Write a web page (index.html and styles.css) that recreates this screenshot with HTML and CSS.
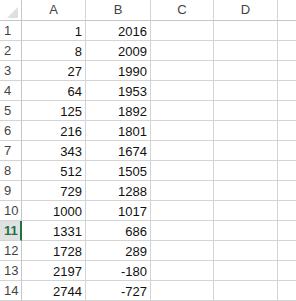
FILE: index.html
```html
<!DOCTYPE html>
<html lang="en">
<head>
    <meta charset="UTF-8">
    <title>Sheet1</title>
    <link rel="stylesheet" href="styles.css">
</head>
<body>
    <div class="sheet">
        <div class="corner"><span class="tri"></span></div>
        <div class="colhead">A</div>
        <div class="colhead">B</div>
        <div class="colhead">C</div>
        <div class="colhead">D</div>
        <div class="colhead last"></div>

        <div class="rowhead">1</div><div class="cell">1</div><div class="cell">2016</div><div class="cell"></div><div class="cell"></div><div class="cell last"></div>
        <div class="rowhead">2</div><div class="cell">8</div><div class="cell">2009</div><div class="cell"></div><div class="cell"></div><div class="cell last"></div>
        <div class="rowhead">3</div><div class="cell">27</div><div class="cell">1990</div><div class="cell"></div><div class="cell"></div><div class="cell last"></div>
        <div class="rowhead">4</div><div class="cell">64</div><div class="cell">1953</div><div class="cell"></div><div class="cell"></div><div class="cell last"></div>
        <div class="rowhead">5</div><div class="cell">125</div><div class="cell">1892</div><div class="cell"></div><div class="cell"></div><div class="cell last"></div>
        <div class="rowhead">6</div><div class="cell">216</div><div class="cell">1801</div><div class="cell"></div><div class="cell"></div><div class="cell last"></div>
        <div class="rowhead">7</div><div class="cell">343</div><div class="cell">1674</div><div class="cell"></div><div class="cell"></div><div class="cell last"></div>
        <div class="rowhead">8</div><div class="cell">512</div><div class="cell">1505</div><div class="cell"></div><div class="cell"></div><div class="cell last"></div>
        <div class="rowhead">9</div><div class="cell">729</div><div class="cell">1288</div><div class="cell"></div><div class="cell"></div><div class="cell last"></div>
        <div class="rowhead">10</div><div class="cell">1000</div><div class="cell">1017</div><div class="cell"></div><div class="cell"></div><div class="cell last"></div>
        <div class="rowhead active">11</div><div class="cell">1331</div><div class="cell">686</div><div class="cell"></div><div class="cell"></div><div class="cell last"></div>
        <div class="rowhead">12</div><div class="cell">1728</div><div class="cell">289</div><div class="cell"></div><div class="cell"></div><div class="cell last"></div>
        <div class="rowhead">13</div><div class="cell">2197</div><div class="cell">-180</div><div class="cell"></div><div class="cell"></div><div class="cell last"></div>
        <div class="rowhead">14</div><div class="cell">2744</div><div class="cell">-727</div><div class="cell"></div><div class="cell"></div><div class="cell last"></div>
    </div>
</body>
</html>
```

FILE: styles.css
```css
body {
    margin: 0;
    background: #fff;
    font-family: "Liberation Sans", Arial, sans-serif;
    font-size: 13px;
    overflow: hidden;
}
.sheet {
    display: grid;
    grid-template-columns: 22px 64px 65px 63px 64px 1fr;
    grid-template-rows: 21px repeat(14, 20px);
    width: 296px;
}
.corner,
.colhead,
.rowhead,
.cell {
    box-sizing: border-box;
    border-right: 1px solid #d4d4d4;
    border-bottom: 1px solid #d4d4d4;
    white-space: nowrap;
    overflow: hidden;
}
.corner {
    position: relative;
    border-right-color: #c6c6c6;
    border-bottom-color: #c6c6c6;
}
.tri {
    position: absolute;
    left: 7px;
    top: 7px;
    width: 0;
    height: 0;
    border-left: 11px solid transparent;
    border-bottom: 11px solid #dfdfdf;
}
.colhead {
    color: #444;
    text-align: center;
    line-height: 20px;
    border-bottom-color: #c6c6c6;
}
.rowhead {
    color: #444;
    padding-left: 4px;
    line-height: 20px;
    border-right-color: #c6c6c6;
}
.rowhead.active {
    background: #e1e1e1;
    color: #217346;
    font-weight: bold;
    border-right: 2px solid #217346;
}
.cell {
    color: #111;
    text-align: right;
    padding-right: 3px;
    line-height: 21px;
}
.last {
    border-right: none;
}
```
